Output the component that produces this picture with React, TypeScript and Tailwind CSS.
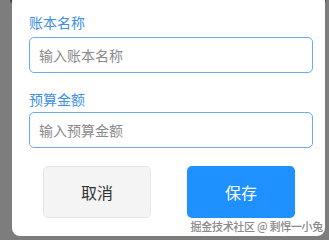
const font = { fontFamily: '"Noto Sans CJK SC", "Noto Sans", sans-serif' };

const Field = ({ label, placeholder, labelClass }: { label: string; placeholder: string; labelClass: string }) => {
  return (
    <div className="flex flex-col">
      <label className={`text-[14px] leading-[20px] text-[#3d8fe8] ${labelClass}`}>{label}</label>
      <input
        placeholder={placeholder}
        className="w-[284px] h-[36px] rounded-[5px] border border-[#6aaaf0] bg-white px-[9px] text-[14px] text-[#333] placeholder:text-[#8a8a8a] outline-none"
      />
    </div>
  );
};

export default function App() {
  return (
    <div className="w-[329px] h-[240px] bg-[#7d7d7d] relative overflow-hidden" style={font}>
      <div className="absolute left-[10px] top-0 w-[4px] h-[3px] rounded-b-full bg-[#2d4a6e]" />
      <div className="absolute left-[322px] top-0 w-[4px] h-[3px] rounded-b-full bg-[#2d4a6e]" />
      <div className="ml-[12px] w-[313px] h-[236px] bg-white rounded-b-[8px] pl-[17px] pt-[12px] relative">
        <Field label="账本名称" placeholder="输入账本名称" labelClass="mb-[5px]" />
        <div className="h-[16px]" />
        <Field label="预算金额" placeholder="输入预算金额" labelClass="mb-[3px]" />
        <div className="flex mt-[18px] pl-[14px] gap-[36px]">
          <button className="w-[108px] h-[52px] rounded-[5px] border border-[#e6e6e6] bg-[#f4f4f5] text-[16px] text-[#333]">
            取消
          </button>
          <button className="w-[108px] h-[52px] rounded-[5px] bg-[#1e90ff] text-[16px] text-white">
            保存
          </button>
        </div>
        <div className="absolute right-[2px] bottom-[4px] text-[11px] leading-[12px] tracking-[-0.3px] font-medium text-[#8a8a8a] [text-shadow:0_0_1px_#ffffff]">
          掘金技术社区 @ 剩悍一小兔
        </div>
      </div>
    </div>
  );
}
